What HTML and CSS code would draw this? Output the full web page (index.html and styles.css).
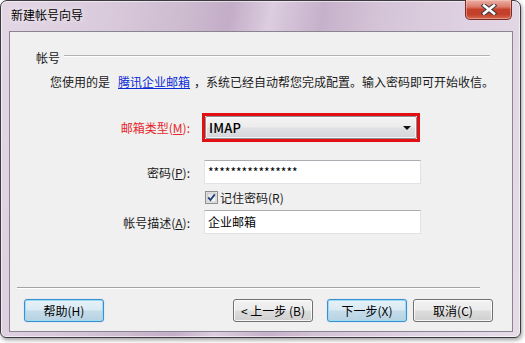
FILE: index.html
```html
<!DOCTYPE html>
<html lang="zh-CN">
<head>
<meta charset="utf-8">
<title>新建帐号向导</title>
<link rel="stylesheet" href="styles.css">
</head>
<body>
<div class="window">
  <div class="titlebar">
    <span class="title">新建帐号向导</span>
    <div class="close">
      <svg width="16" height="11" viewBox="0 0 16 11">
        <path d="M3 1.5 L13 9.5 M13 1.5 L3 9.5" stroke="#3a3a3a" stroke-width="4.6" stroke-linecap="square"/>
        <path d="M3 1.5 L13 9.5 M13 1.5 L3 9.5" stroke="#ffffff" stroke-width="2.6" stroke-linecap="square"/>
      </svg>
    </div>
  </div>
  <div class="client">
    <div class="group-head"><span>帐号</span><span class="rule"></span></div>
    <p class="intro">您使用的是<a class="link">腾讯企业邮箱</a>，系统已经自动帮您完成配置。输入密码即可开始收信。</p>
    <div class="form">
      <div class="row row-type">
        <span class="lbl red">邮箱类型(<u>M</u>):</span>
        <div class="combo-hl">
          <div class="combo"><span class="combo-val">IMAP</span><span class="arrow"></span></div>
        </div>
      </div>
      <div class="row row-pass">
        <span class="lbl">密码(<u>P</u>):</span>
        <div class="input pw">****************</div>
      </div>
      <div class="row row-check">
        <span class="check">
          <svg width="13" height="13" viewBox="0 0 13 13">
            <defs>
              <linearGradient id="cb" x1="0" y1="0" x2="1" y2="1">
                <stop offset="0" stop-color="#dcdcdc"/>
                <stop offset="1" stop-color="#ffffff"/>
              </linearGradient>
            </defs>
            <rect x="0.5" y="0.5" width="12" height="12" fill="#f4f4f4" stroke="#8e8f8f"/>
            <rect x="2" y="2" width="9" height="9" fill="url(#cb)" stroke="#b9bbbf" stroke-width="0.8"/>
            <path d="M3.2 6.4 L5.4 9 L9.8 3.4" fill="none" stroke="#21407a" stroke-width="1.8"/>
          </svg>
        </span>
        <span class="check-lbl">记住密码(R)</span>
      </div>
      <div class="row row-desc">
        <span class="lbl">帐号描述(<u>A</u>):</span>
        <div class="input">企业邮箱</div>
      </div>
    </div>
    <div class="footer">
      <div class="sep"></div>
      <div class="buttons">
        <div class="btn blue">帮助(H)</div>
        <div class="btn back">&lt; 上一步 (B)</div>
        <div class="btn blue next">下一步(X)</div>
        <div class="btn cancel">取消(C)</div>
      </div>
    </div>
  </div>
</div>
</body>
</html>
```
FILE: styles.css
```css
* { box-sizing: border-box; }
html, body {
  margin: 0;
  padding: 0;
}
body {
  width: 525px;
  height: 343px;
  overflow: hidden;
  background: #ffffff;
  font-family: "Noto Sans CJK SC", "Noto Sans", sans-serif;
  font-size: 12px;
  color: #1a1a1a;
}
.window {
  width: 521px;
  height: 338px;
  border: 1px solid #3d3941;
  border-radius: 7px 7px 6px 6px;
  background:
    linear-gradient(100deg,
      #e3d7e5 0%, #dacbdc 18%, #cdbbd0 32%, #c3adc7 40%,
      #dccde0 47%, #c6b1ca 56%, #d5c4d8 66%, #dfd2e2 82%, #e6dce8 100%);
  box-shadow: 1px 2px 4px rgba(0,0,0,0.4), inset 0 0 0 1px rgba(255,255,255,0.55);
  display: flex;
  flex-direction: column;
  padding: 0 7px 5px 8px;
}
.titlebar {
  height: 30px;
  display: flex;
  justify-content: space-between;
  align-items: flex-start;
}
.title {
  margin-top: 6px;
  padding-left: 2px;
  line-height: 16px;
  font-size: 12px;
  color: #000;
  text-shadow: 0 0 6px rgba(255,255,255,0.9);
}
.close {
  width: 47px;
  height: 20px;
  margin-top: -1px;
  margin-right: 1px;
  border: 1px solid #7a2d25;
  border-top: none;
  border-radius: 0 0 5px 5px;
  background: linear-gradient(180deg, #eab1a6 0%, #dc7d6c 35%, #c6412c 50%, #c23f2a 75%, #d46a4f 100%);
  box-shadow: inset 0 0 0 1px rgba(255,210,200,0.45);
  display: flex;
  align-items: center;
  justify-content: center;
}
.client {
  flex: 1;
  border: 1px solid #8a8490;
  background: #f0f0f0;
  display: flex;
  flex-direction: column;
}
.group-head {
  margin: 18px 22px 0 26px;
  height: 16px;
  display: flex;
  align-items: center;
  line-height: 16px;
}
.rule {
  flex: 1;
  margin-left: 4px;
  margin-top: -5px;
  border-top: 1px solid #b4b4b4;
  border-bottom: 1px solid #ffffff;
}
.intro {
  margin: 8px 0 0 40px;
  line-height: 16px;
  white-space: nowrap;
}
.link {
  color: #0a2ad6;
  text-decoration: underline;
  margin: 0 4px 0 8px;
}
.form {
  margin-top: 23px;
}
.row {
  display: flex;
  align-items: center;
}
.lbl {
  width: 180px;
  text-align: right;
  white-space: nowrap;
}
.red { color: #e5262a; }
.row-type { height: 29px; }
.combo-hl {
  margin-left: 12px;
  width: 218px;
  height: 29px;
  border: 3px solid #e20f13;
  padding: 0;
}
.combo {
  height: 100%;
  border: 1px solid #8d8f93;
  border-radius: 2px;
  background: linear-gradient(180deg, #f4f4f4 0%, #ececec 48%, #dfe1e3 52%, #d4d6d9 100%);
  box-shadow: inset 0 0 0 1px rgba(255,255,255,0.7);
  display: flex;
  align-items: center;
  justify-content: space-between;
  padding: 0 5px 0 3px;
}
.combo-val {
  font-size: 13px;
  color: #000;
  font-weight: 500;
  letter-spacing: 0.2px;
}
.arrow {
  width: 0;
  height: 0;
  border-left: 4px solid transparent;
  border-right: 4px solid transparent;
  border-top: 4px solid #111;
}
.input {
  margin-left: 14px;
  width: 217px;
  height: 24px;
  background: #ffffff;
  border: 1px solid #dfe3e8;
  border-top-color: #abadb3;
  border-left-color: #e2e3ea;
  padding-left: 3px;
  line-height: 22px;
  color: #000;
}
.pw { letter-spacing: 0; font-size: 12px; }
.row-pass { margin-top: 18px; }
.row-check { margin-top: 4px; height: 18px; }
.check {
  margin-left: 195px;
  width: 13px;
  height: 13px;
  display: flex;
}
.check-lbl { margin-left: 2px; }
.row-desc { margin-top: 4px; }
.footer {
  margin-top: auto;
  padding-bottom: 9px;
}
.sep {
  margin: 0 32px 0 7px;
  border-top: 1px solid #a3a3a3;
  border-bottom: 1px solid #ffffff;
}
.buttons {
  margin-top: 10px;
  display: flex;
  padding: 0 19px 0 14px;
}
.btn {
  width: 80px;
  height: 23px;
  border: 1px solid #707070;
  border-radius: 3px;
  background: linear-gradient(180deg, #f2f2f2 0%, #ebebeb 48%, #dddddd 52%, #cfcfcf 100%);
  box-shadow: inset 0 0 0 1px rgba(255,255,255,0.8);
  display: flex;
  align-items: center;
  justify-content: center;
  color: #000;
  white-space: nowrap;
}
.btn.blue {
  border-color: #3c8fd0;
  background: linear-gradient(180deg, #e6f1f8 0%, #d9e9f3 48%, #c5dcea 52%, #b7d2e3 100%);
  box-shadow: inset 0 0 0 1px #9fdaf5, 0 0 1px rgba(60,150,220,0.6);
}
.back { margin-left: auto; }
.next { margin-left: 14px; }
.cancel { margin-left: 6px; }
```
